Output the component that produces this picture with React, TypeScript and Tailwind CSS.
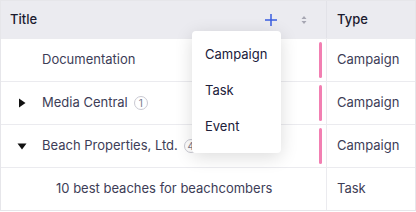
import React from 'react';

type Row = {
  title: string;
  type: string;
  depth: 0 | 1;
  toggle?: 'open' | 'closed';
  count?: number;
  marker?: boolean;
};

const rows: Row[] = [
  { title: 'Documentation', type: 'Campaign', depth: 0, marker: true },
  { title: 'Media Central', type: 'Campaign', depth: 0, toggle: 'closed', count: 1, marker: true },
  { title: 'Beach Properties, Ltd.', type: 'Campaign', depth: 0, toggle: 'open', count: 4, marker: true },
  { title: '10 best beaches for beachcombers', type: 'Task', depth: 1 },
];

function Toggle({ state }: { state: 'open' | 'closed' }) {
  return (
    <svg width="10" height="10" viewBox="0 0 10 10" className="shrink-0">
      {state === 'closed' ? <path d="M2 0.5 L8.5 5 L2 9.5 Z" fill="#111" /> : <path d="M0.5 2.5 L9.5 2.5 L5 8.5 Z" fill="#111" />}
    </svg>
  );
}

export default function App() {
  return (
    <div className="relative h-[212px] w-[416px] bg-white font-['Inter',sans-serif] text-[13px] text-[#3d3d57]">
      <div className="border border-[#e6e6ea]">
        <div className="flex h-[37px] bg-[#ebebf0] text-[#1b1b2f]">
          <div className="flex flex-1 items-center pl-[9px] font-medium">
            <span>Title</span>
            <div className="ml-auto flex items-center gap-[22px] pr-[18px]">
              <svg width="14" height="14" viewBox="0 0 14 14">
                <path d="M7 1 V13 M1 7 H13" stroke="#3a5ee0" strokeWidth="1.5" />
              </svg>
              <svg width="8" height="12" viewBox="0 0 8 12">
                <path d="M4 2 L6.5 5 H1.5 Z M4 10 L6.5 7 H1.5 Z" fill="#a6a6b2" />
              </svg>
            </div>
          </div>
          <div className="flex w-[89px] items-center border-l border-[#e2e2e8] pl-[10px] font-medium">Type</div>
        </div>
        {rows.map((r, i) => (
          <div key={i} className="flex h-[43px] border-t border-[#ebebef]">
            <div className="flex flex-1 items-center pr-[4px]">
              <div className={`flex items-center ${r.depth === 1 ? 'pl-[55px]' : 'pl-[16px]'}`}>
                {r.depth === 0 && (
                  <div className="flex w-[25px] items-center">{r.toggle && <Toggle state={r.toggle} />}</div>
                )}
                <span>{r.title}</span>
                {r.count !== undefined && (
                  <span className="ml-[6px] flex h-[14px] w-[14px] items-center justify-center rounded-full border border-[#c9c9d2] text-[10px] text-[#7a7a8a]">
                    {r.count}
                  </span>
                )}
              </div>
              {r.marker && <div className="ml-auto h-[36px] w-[3px] rounded-full bg-[#f27fb2]" />}
            </div>
            <div className="flex w-[89px] items-center border-l border-[#ebebef] pl-[10px]">{r.type}</div>
          </div>
        ))}
      </div>
      <div className="absolute left-[192px] top-[31px] w-[89px] rounded-[4px] bg-white pb-[8px] pt-[6px] text-[#20203a] shadow-[0_4px_18px_rgba(0,0,0,0.14)]">
        {['Campaign', 'Task', 'Event'].map((t) => (
          <div key={t} className="flex h-[36px] items-center pl-[13px]">
            {t}
          </div>
        ))}
      </div>
    </div>
  );
}
